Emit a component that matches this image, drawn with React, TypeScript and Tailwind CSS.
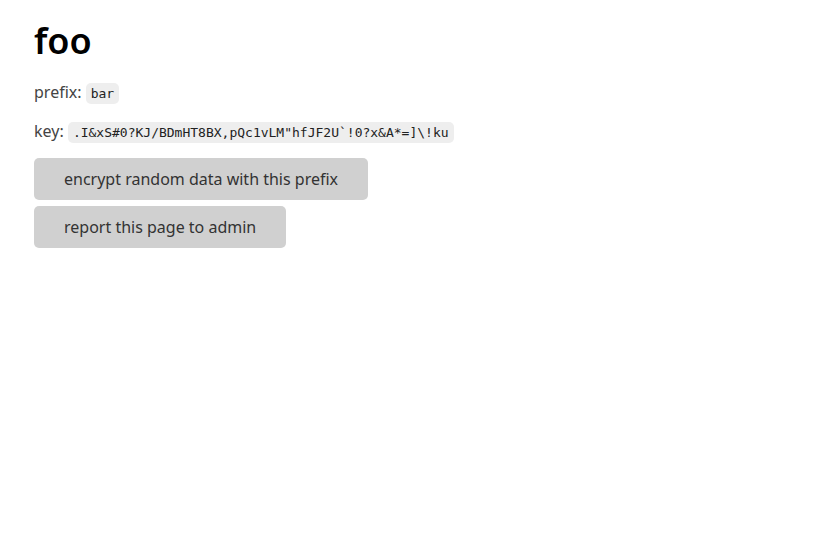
import React from 'react';

const keyText = '.I&xS#0?KJ/BDmHT8BX,pQc1vLM"hfJF2U`!0?x&A*=]\\!ku';

export default function App() {
  return (
    <div className="min-h-screen bg-white px-[34px] pt-[18px] text-[#444] font-['Noto_Sans',sans-serif]">
      <h1 className="text-[36px] font-semibold leading-[46px] text-black">foo</h1>
      <p className="mt-[16px] text-[16px] leading-[24px]">
        prefix:{' '}
        <code className="rounded-[5px] bg-[#eeeeee] px-[5px] py-[3px] font-['DejaVu_Sans_Mono',monospace] text-[13px] text-[#222]">
          bar
        </code>
      </p>
      <p className="mt-[13px] text-[16px] leading-[24px]">
        key:{' '}
        <code className="rounded-[5px] bg-[#eeeeee] px-[5px] py-[3px] font-['DejaVu_Sans_Mono',monospace] text-[13px] text-[#222]">
          {keyText}
        </code>
      </p>
      <div className="mt-[13px] flex flex-col items-start gap-[6px]">
        <button className="h-[42px] rounded-[5px] bg-[#d0d0d0] px-[30px] text-[16px] text-[#333]">
          encrypt random data with this prefix
        </button>
        <button className="h-[42px] rounded-[5px] bg-[#d0d0d0] px-[30px] text-[16px] text-[#333]">
          report this page to admin
        </button>
      </div>
    </div>
  );
}
